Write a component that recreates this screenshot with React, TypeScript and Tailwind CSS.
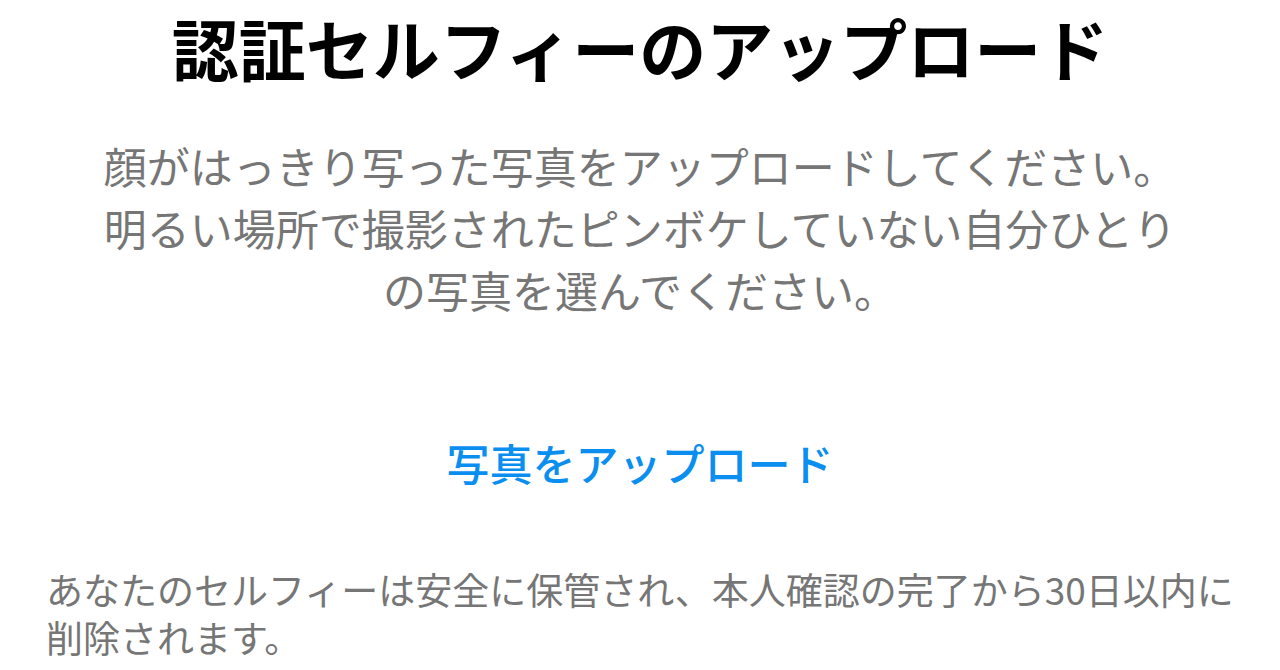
export default function App() {
    return (
        <div
            className="min-h-screen bg-white flex flex-col"
            style={{ fontFamily: '"Noto Sans CJK JP", "Noto Sans", sans-serif' }}
        >
            {/* heading */}
            <h1 className="pt-[7px] text-center text-[67px] leading-[80px] font-bold text-black">
                認証セルフィーのアップロード
            </h1>

            {/* description */}
            <p className="mt-[47px] mx-auto max-w-[1100px] text-center text-[43px] leading-[62px] text-[#767676]">
                顔がはっきり写った写真をアップロードしてください。明るい場所で撮影されたピンボケしていない自分ひとりの写真を選んでください。
            </p>

            {/* action */}
            <div className="mt-[112px] flex justify-center">
                <button className="text-[43px] leading-[60px] font-medium text-[#0a8ef0]">
                    写真をアップロード
                </button>
            </div>

            {/* note */}
            <p className="mt-[73px] px-[46px] text-[37px] leading-[48px] text-[#767676]">
                あなたのセルフィーは安全に保管され、本人確認の完了から30日以内に削除されます。
            </p>
        </div>
    );
}
